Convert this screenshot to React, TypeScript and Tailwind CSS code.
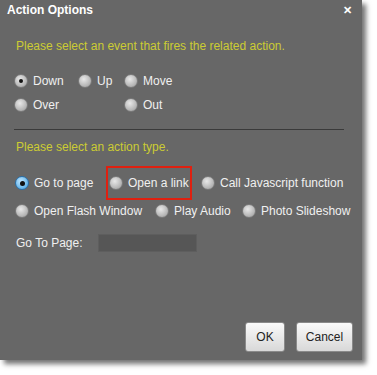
import React from 'react'

const Radio = ({ checked, blue }: { checked?: boolean; blue?: boolean }) => {
  if (blue) {
    return (
      <span className="w-[14px] h-[14px] rounded-full bg-[radial-gradient(circle_at_40%_35%,#bfe6ff,#3d9ee0)] border border-[#2a6fa8] flex items-center justify-center shrink-0">
        <span className="w-[5px] h-[5px] rounded-full bg-[#111]" />
      </span>
    )
  }
  return (
    <span className="w-[14px] h-[14px] rounded-full bg-[radial-gradient(circle_at_40%_35%,#e8e8e8,#9a9a9a)] border border-[#7a7a7a] flex items-center justify-center shrink-0">
      {checked && <span className="w-[4px] h-[4px] rounded-full bg-[#111]" />}
    </span>
  )
}

const Option = ({ label, w, checked, blue }: { label: string; w?: string; checked?: boolean; blue?: boolean }) => (
  <div className={`flex items-center gap-[5px] ${w ?? ''}`}>
    <Radio checked={checked} blue={blue} />
    <span>{label}</span>
  </div>
)

export default function App() {
  return (
    <div className="w-[377px] h-[375px] bg-white font-['Liberation_Sans',Arial,sans-serif] text-[12px] leading-[18px]">
      <div className="w-[362px] h-[360px] bg-[#676767] shadow-[4px_4px_5px_rgba(0,0,0,0.55)] flex flex-col text-[#f0f0f0]">
        {/* Title bar */}
        <div className="flex items-center justify-between h-[20px] pl-[7px] pr-[10px]">
          <span className="font-bold text-white text-[12px]">Action Options</span>
          <span className="text-white font-bold text-[11px] leading-none">✕</span>
        </div>

        <div className="pl-[16px] pr-[18px] pt-[17px] text-[#cccc33]">
          Please select an event that fires the related action.
        </div>

        {/* Event radios */}
        <div className="flex flex-col gap-[6px] pl-[14px] pt-[17px]">
          <div className="flex items-center">
            <Option label="Down" w="w-[64px]" checked />
            <Option label="Up" w="w-[46px]" />
            <Option label="Move" />
          </div>
          <div className="flex items-center">
            <Option label="Over" w="w-[110px]" />
            <Option label="Out" />
          </div>
        </div>

        <div className="mx-[14px] mt-[15px] h-px bg-[#3a3a3a] w-[330px]" />

        <div className="pl-[16px] pt-[8px] text-[#cccc33]">Please select an action type.</div>

        {/* Action radios */}
        <div className="flex flex-col pl-[15px] pt-[10px]">
          <div className="flex items-center h-[34px]">
            <Option label="Go to page" w="w-[91px]" blue />
            <div className="w-[86px] h-[34px] border-2 border-[#e02010] pl-[1px] flex items-center">
              <Option label="Open a link" />
            </div>
            <div className="ml-[9px]">
              <Option label="Call Javascript function" />
            </div>
          </div>
          <div className="flex items-center mt-[2px]">
            <Option label="Open Flash Window" w="w-[140px]" />
            <Option label="Play Audio" w="w-[87px]" />
            <Option label="Photo Slideshow" />
          </div>
        </div>

        <div className="flex items-center pl-[16px] pt-[14px]">
          <span className="w-[82px]">Go To Page:</span>
          <div className="w-[99px] h-[18px] bg-[#565656] border border-[#5e5e5e]" />
        </div>

        <div className="flex-1" />

        <div className="flex justify-end gap-[11px] pr-[9px] pb-[8px]">
          <button className="w-[40px] h-[30px] rounded-[3px] border border-[#8a8a8a] bg-gradient-to-b from-[#fafafa] to-[#d8d8d8] text-[#222]">
            OK
          </button>
          <button className="w-[57px] h-[30px] rounded-[3px] border border-[#8a8a8a] bg-gradient-to-b from-[#fafafa] to-[#d8d8d8] text-[#222]">
            Cancel
          </button>
        </div>
      </div>
    </div>
  )
}
